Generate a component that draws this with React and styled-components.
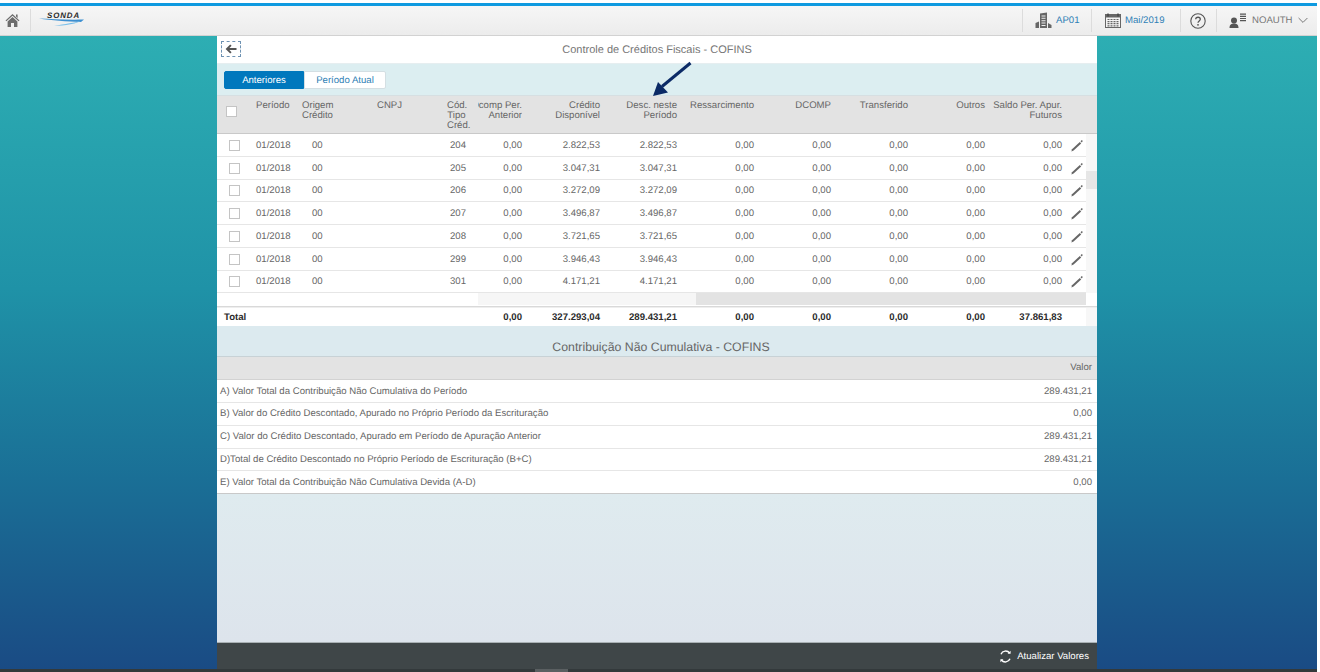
import React from "react";
import styled, { createGlobalStyle } from "styled-components";

const GlobalStyle = createGlobalStyle`
  html, body { margin: 0; padding: 0; background: #fff; overflow: hidden; }
  body {
    font-family: "Liberation Sans", Arial, sans-serif;
    text-rendering: geometricPrecision;
  }
`;

const Page = styled.div`
  width: 1317px;
  height: 672px;
  display: flex;
  flex-direction: column;
  overflow: hidden;
`;

const TopBar = styled.header`
  height: 36px;
  box-sizing: border-box;
  border-top: 3px solid #fff;
  display: flex;
  flex-direction: column;
`;

const BlueLine = styled.div`
  height: 3px;
  background: #0e9ae0;
`;

const TopInner = styled.div`
  flex: 1;
  display: flex;
  align-items: center;
  justify-content: space-between;
  background: linear-gradient(#f6f6f6, #ececec);
  border-bottom: 1px solid #d2d2d2;
`;

const TopGroup = styled.div`
  display: flex;
  align-items: center;
`;

const HomeButton = styled.div`
  width: 31px;
  height: 23px;
  box-sizing: border-box;
  padding-left: 5px;
  display: flex;
  align-items: center;
  border-right: 1px solid #dcdcdc;
`;

const Logo = styled.div`
  position: relative;
  width: 46px;
  height: 20px;
  margin-left: 8px;
`;

const LogoWord = styled.span`
  position: absolute;
  left: 8px;
  top: 0;
  font-size: 7.9px;
  font-weight: 700;
  font-style: italic;
  letter-spacing: 0.9px;
  color: #2b2b2b;
`;

const TopItem = styled.div`
  width: ${(p) => p.$width}px;
  height: 23px;
  box-sizing: border-box;
  display: flex;
  align-items: center;
  gap: ${(p) => p.$gap}px;
  padding-left: ${(p) => p.$pad}px;
  border-left: 1px solid #dcdcdc;
  font-size: 9.6px;
  color: ${(p) => (p.$muted ? "#777" : "#2f7fb5")};
`;

const Main = styled.main`
  flex: 1;
  min-height: 0;
  display: grid;
  grid-template-columns: 217px 880px 1fr;
  background: linear-gradient(#2daeb3 0%, #1f92a7 40%, #1a6f96 70%, #1a4b84 100%);
`;

const Panel = styled.section`
  grid-column: 2;
  position: relative;
  display: flex;
  flex-direction: column;
  min-height: 0;
  background: #fff;
`;

const TitleRow = styled.div`
  height: 27px;
  flex: none;
  position: relative;
  display: flex;
  align-items: center;
  justify-content: center;
  box-sizing: border-box;
  font-size: 11px;
  color: #767676;
`;

const BackButton = styled.button`
  position: absolute;
  left: 4px;
  top: 5px;
  width: 20px;
  height: 16px;
  padding: 0;
  display: flex;
  align-items: center;
  justify-content: center;
  background: #fff;
  border: 1px dashed #6f93b3;
`;

const TabStrip = styled.div`
  height: 32px;
  flex: none;
  box-sizing: border-box;
  padding: 7px 0 0 7px;
  display: flex;
  align-items: flex-start;
  background: #dceef1;
  border-top: 1px solid #e6eef0;
`;

const Tab = styled.div`
  width: ${(p) => p.$width}px;
  height: 18px;
  box-sizing: border-box;
  display: flex;
  align-items: center;
  justify-content: center;
  font-size: 9.6px;
  color: ${(p) => (p.$active ? "#fff" : "#2f7fb5")};
  background: ${(p) => (p.$active ? "#0078bd" : "#fff")};
  border: 1px solid ${(p) => (p.$active ? "#0078bd" : "#d4dfe3")};
  border-radius: ${(p) => (p.$active ? "2px 0 0 2px" : "0 2px 2px 0")};
`;

const columns = "21px 34px 63px 51px 32px 44px 66px 65px 65px 65px 65px 65px 65px 12px";

const HeadRow = styled.div`
  height: 39px;
  flex: none;
  box-sizing: border-box;
  display: grid;
  grid-template-columns: ${columns};
  column-gap: 12px;
  background: #e3e3e3;
  border-bottom: 1px solid #c9c9c9;
  border-top: 1px solid #d6dfe2;
  font-size: 9.6px;
  line-height: 10.4px;
  color: #666;
`;

const HeadCell = styled.div`
  display: flex;
  flex-direction: column;
  align-items: ${(p) => (p.$left ? "flex-start" : "flex-end")};
  overflow: ${(p) => (p.$clip ? "hidden" : "visible")};
  white-space: nowrap;
  padding-top: 4.5px;
  padding-left: ${(p) => (p.$left ? 6 : 0)}px;
`;

const CodHead = styled(HeadCell)`
  span { display: block; width: 19px; text-align: center; }
`;

const Check = styled.span`
  display: block;
  width: 11px;
  height: 11px;
  box-sizing: border-box;
  background: #fff;
  border: 1px solid #c4c4c4;
`;

const HeadCheck = styled(Check)`
  margin: 10px 0 0 9px;
`;

const RowCheck = styled(Check)`
  margin-left: 12px;
`;

const TableBody = styled.div`
  flex: none;
  display: flex;
`;

const Rows = styled.div`
  width: 869px;
`;

const Row = styled.div`
  height: 22.75px;
  box-sizing: border-box;
  padding-top: 1px;
  display: grid;
  grid-template-columns: ${columns};
  column-gap: 12px;
  align-items: center;
  border-bottom: 1px solid #e6e6e6;
  font-size: 9.6px;
  color: #666;
`;

const Cell = styled.div`
  white-space: nowrap;
  text-align: ${(p) => (p.$left ? "left" : "right")};
  padding-left: ${(p) => p.$left || 0}px;
`;

const EditIcon = styled.svg`
  display: block;
  width: 12px;
  height: 13px;
  margin-left: -3px;
`;

const VScroll = styled.div`
  flex: 1;
  background: #f7f7f7;
`;

const VThumb = styled.div`
  height: 18px;
  margin-top: 37px;
  background: #e6e6e6;
`;

const HScroll = styled.div`
  flex: none;
  height: 13px;
  display: grid;
  grid-template-columns: 261px 218px 390px;
  border-bottom: 1px solid #d9d9d9;
`;

const HTrack = styled.div`
  background: #f6f6f6;
  margin-bottom: 1px;
`;

const HThumb = styled.div`
  background: #e3e3e3;
  margin-bottom: 1px;
`;

const TotalWrap = styled.div`
  flex: none;
  height: 19px;
  display: flex;
  box-sizing: border-box;
  border-top: 1px solid #eee;
`;

const TotalRow = styled.div`
  width: 869px;
  box-sizing: border-box;
  padding-top: 1px;
  display: grid;
  grid-template-columns: ${columns};
  column-gap: 12px;
  align-items: center;
  font-size: 9.6px;
  font-weight: 700;
  color: #2b2b2b;
`;

const TotalLabel = styled.div`
  grid-column: 1 / 6;
  padding-left: 7px;
`;

const SectionTitle = styled.div`
  flex: none;
  height: 31px;
  box-sizing: border-box;
  padding: 14px 0 0 8px;
  text-align: center;
  font-size: 12.3px;
  line-height: 15px;
  color: #666;
  background: #dceaef;
  border-bottom: 1px solid #c8d2d6;
`;

const ValueHead = styled.div`
  flex: none;
  height: 23px;
  box-sizing: border-box;
  padding: 0 5px 1px;
  display: flex;
  align-items: center;
  justify-content: flex-end;
  font-size: 9.6px;
  color: #666;
  background: #e3e3e3;
  border-bottom: 1px solid #d2d2d2;
`;

const SummaryRow = styled.div`
  flex: none;
  height: 22.75px;
  box-sizing: border-box;
  padding: 0 5px 0 3px;
  display: flex;
  align-items: center;
  justify-content: space-between;
  font-size: 9.6px;
  color: #666;
  background: #fff;
  border-bottom: 1px solid ${(p) => (p.$last ? "#c9c9c9" : "#e6e6e6")};
`;

const Filler = styled.div`
  flex: 1;
  background: linear-gradient(#dfebef, #dde4ec);
`;

const Footer = styled.footer`
  flex: none;
  height: 27px;
  box-sizing: border-box;
  padding-right: 8px;
  display: flex;
  align-items: center;
  justify-content: flex-end;
  gap: 5px;
  font-size: 9.6px;
  color: #fff;
  background: #3f4648;
  border-top: 1px solid #a9b1b4;
`;

const BottomBar = styled.div`
  flex: none;
  height: 3px;
  background: #33393b;
`;

const BottomThumb = styled.div`
  width: 33px;
  height: 3px;
  margin-left: 535px;
  background: #5a5f61;
`;

const CalloutArrow = styled.svg`
  position: absolute;
  left: 433px;
  top: 25px;
  width: 44px;
  height: 38px;
  pointer-events: none;
`;

const head = [
  ["Crédito", "Disponível"],
  ["Desc. neste", "Período"],
  ["Ressarcimento"],
  ["DCOMP"],
  ["Transferido"],
  ["Outros"],
  ["Saldo Per. Apur.", "Futuros"],
];

const rows = [
  ["204", "2.822,53"],
  ["205", "3.047,31"],
  ["206", "3.272,09"],
  ["207", "3.496,87"],
  ["208", "3.721,65"],
  ["299", "3.946,43"],
  ["301", "4.171,21"],
];

const totals = ["0,00", "327.293,04", "289.431,21", "0,00", "0,00", "0,00", "0,00", "37.861,83"];

const summary = [
  ["A) Valor Total da Contribuição Não Cumulativa do Período", "289.431,21"],
  ["B) Valor do Crédito Descontado, Apurado no Próprio Período da Escrituração", "0,00"],
  ["C) Valor do Crédito Descontado, Apurado em Período de Apuração Anterior", "289.431,21"],
  ["D)Total de Crédito Descontado no Próprio Período de Escrituração (B+C)", "289.431,21"],
  ["E) Valor Total da Contribuição Não Cumulativa Devida (A-D)", "0,00"],
];

const HomeIcon = () => (
  <svg width="15" height="15" viewBox="0 0 15 15" fill="#6c6c6c">
    <path d="M7.5 1 L14.5 7.4 L13.6 8.3 L7.5 2.8 L1.4 8.3 L.5 7.4 Z" />
    <path d="M11 1.5h1.6v3.4L11 3.5Z" />
    <path d="M2.6 8.4 L7.5 4 L12.4 8.4 V14 H9 V10 H6 V14 H2.6 Z" />
  </svg>
);

const Swoosh = () => (
  <svg width="46" height="20" viewBox="0 0 46 20">
    <path d="M0 7.5 C12 8 28 9 45 8.5 L42 11 C28 10.5 12 9.5 0 7.5Z" fill="#3d8fd0" />
    <path d="M45 8.5 C38 13 26 14.5 15 15 C26 13 36 11.5 42 10Z" fill="#7cc0ea" />
  </svg>
);

const BuildingIcon = () => (
  <svg width="17" height="17" viewBox="0 0 17 17" fill="#666">
    <path d="M5 1.5 L12 .5 V16 H5Z M6.5 3.4v1h4v-1Z M6.5 5.8v1h4v-1Z M6.5 8.2v1h4v-1Z M6.5 10.6v1h4v-1Z M6.5 13v1h4v-1Z" fillRule="evenodd" />
    <path d="M.5 11 L4 9.5 V16 H.5Z M13 11 L16.5 13 V16 H13Z" />
  </svg>
);

const CalendarIcon = () => (
  <svg width="16" height="15" viewBox="0 0 16 15">
    <rect x=".5" y="1.5" width="15" height="13" fill="#f4f4f4" stroke="#666" />
    <rect x=".5" y="1.5" width="15" height="3" fill="#666" />
    <path d="M3 3.5v-3M13 3.5v-3" stroke="#444" strokeWidth="1.4" />
    <path d="M2.5 6.5h11M2.5 8.6h11M2.5 10.7h11M2.5 12.8h11" stroke="#666" strokeWidth="1.2" strokeDasharray="2 1" />
  </svg>
);

const HelpIcon = () => (
  <svg width="16" height="16" viewBox="0 0 16 16" fill="none" stroke="#555">
    <circle cx="8" cy="8" r="7.2" strokeWidth="1.1" />
    <path d="M5.7 6.2 C5.8 3.6 10.3 3.6 10.3 6.2 C10.3 7.9 8 7.9 8 9.8" strokeWidth="1.3" />
    <circle cx="8" cy="11.8" r=".9" fill="#555" stroke="none" />
  </svg>
);

const UserIcon = () => (
  <svg width="18" height="15" viewBox="0 0 18 15" fill="#555">
    <circle cx="5" cy="7.6" r="3" />
    <path d="M.5 15 C.5 11.6 2.5 10.6 5 10.6 C7.5 10.6 9.5 11.6 9.5 15Z" />
    <path d="M11 .5h6v1.2h-6Z M11 2.7h6v1.2h-6Z M11 4.9h6v1.2h-6Z M11 7.1h6v1.2h-6Z" />
  </svg>
);

const Chevron = () => (
  <svg width="10" height="7" viewBox="0 0 10 7" fill="none" stroke="#777">
    <path d="M.6 1 L5 5.4 L9.4 1" />
  </svg>
);

const BackArrow = () => (
  <svg width="12" height="10" viewBox="0 0 12 10" fill="#555">
    <path d="M5.2 .4 L6.6 1.8 L4.4 4 H11.5 V6 H4.4 L6.6 8.2 L5.2 9.6 L.6 5Z" />
  </svg>
);

const Pencil = () => (
  <EditIcon viewBox="0 0 12 13" fill="#666">
    <path d="M.4 12.6 L1 10.2 L8.8 3 L10.2 4.4 L2.6 11.6Z" />
    <path d="M9.5 2.3 L10.8 1 L11.8 2 L10.8 3.6Z" />
  </EditIcon>
);

const RefreshIcon = () => (
  <svg width="13" height="13" viewBox="0 0 13 13" fill="none" stroke="#fff" strokeWidth="1.4">
    <path d="M2 4.2 A5 5 0 0 1 10.6 3" />
    <path d="M11 8.8 A5 5 0 0 1 2.4 10" />
    <path d="M11.6 .8v3h-3Z M1.4 12.2v-3h3Z" fill="#fff" stroke="none" />
  </svg>
);

export default function App() {
  return (
    <Page>
      <GlobalStyle />
      <TopBar>
        <BlueLine />
        <TopInner>
          <TopGroup>
            <HomeButton>
              <HomeIcon />
            </HomeButton>
            <Logo>
              <Swoosh />
              <LogoWord>SONDA</LogoWord>
            </Logo>
          </TopGroup>
          <TopGroup>
            <TopItem $width={69} $pad={12} $gap={4}>
              <BuildingIcon />
              AP01
            </TopItem>
            <TopItem $width={89} $pad={13} $gap={4}>
              <CalendarIcon />
              Mai/2019
            </TopItem>
            <TopItem $width={36} $pad={9} $gap={0}>
              <HelpIcon />
            </TopItem>
            <TopItem $width={101} $pad={12} $gap={5} $muted>
              <UserIcon />
              NOAUTH
              <Chevron />
            </TopItem>
          </TopGroup>
        </TopInner>
      </TopBar>

      <Main>
        <Panel>
          <TitleRow>
            <BackButton aria-label="Voltar">
              <BackArrow />
            </BackButton>
            Controle de Créditos Fiscais - COFINS
          </TitleRow>
          <TabStrip>
            <Tab $active $width={80}>Anteriores</Tab>
            <Tab $width={82}>Período Atual</Tab>
          </TabStrip>
          <HeadRow>
            <div>
              <HeadCheck />
            </div>
            <HeadCell $left>Período</HeadCell>
            <HeadCell $left>
              <span>Origem</span>
              <span>Crédito</span>
            </HeadCell>
            <HeadCell $left>CNPJ</HeadCell>
            <CodHead>
              <span>Cód.</span>
              <span>Tipo</span>
              <span>Créd.</span>
            </CodHead>
            <HeadCell $clip>
              <span>Dcomp Per.</span>
              <span>Anterior</span>
            </HeadCell>
            {head.map((lines) => (
              <HeadCell key={lines[0]}>
                {lines.map((l) => (
                  <span key={l}>{l}</span>
                ))}
              </HeadCell>
            ))}
            <div />
          </HeadRow>
          <TableBody>
            <Rows>
              {rows.map(([cod, value]) => (
                <Row key={cod}>
                  <RowCheck />
                  <Cell $left={6}>01/2018</Cell>
                  <Cell $left={16}>00</Cell>
                  <Cell />
                  <Cell>{cod}</Cell>
                  <Cell>0,00</Cell>
                  <Cell>{value}</Cell>
                  <Cell>{value}</Cell>
                  <Cell>0,00</Cell>
                  <Cell>0,00</Cell>
                  <Cell>0,00</Cell>
                  <Cell>0,00</Cell>
                  <Cell>0,00</Cell>
                  <Pencil />
                </Row>
              ))}
            </Rows>
            <VScroll>
              <VThumb />
            </VScroll>
          </TableBody>
          <HScroll>
            <div />
            <HTrack />
            <HThumb />
          </HScroll>
          <TotalWrap>
            <TotalRow>
              <TotalLabel>Total</TotalLabel>
              {totals.map((t, i) => (
                <Cell key={i}>{t}</Cell>
              ))}
            </TotalRow>
            <VScroll />
          </TotalWrap>
          <SectionTitle>Contribuição Não Cumulativa - COFINS</SectionTitle>
          <ValueHead>Valor</ValueHead>
          {summary.map(([label, value], i) => (
            <SummaryRow key={label} $last={i === summary.length - 1}>
              <span>{label}</span>
              <span>{value}</span>
            </SummaryRow>
          ))}
          <Filler />
          <Footer>
            <RefreshIcon />
            Atualizar Valores
          </Footer>
          <CalloutArrow viewBox="0 0 44 38">
            <path d="M40.5 2 L12 25.5" stroke="#0b2a66" strokeWidth="3" />
            <path d="M3 35 L8 21 L18 31.5Z" fill="#0b2a66" />
          </CalloutArrow>
        </Panel>
      </Main>
      <BottomBar>
        <BottomThumb />
      </BottomBar>
    </Page>
  );
}
